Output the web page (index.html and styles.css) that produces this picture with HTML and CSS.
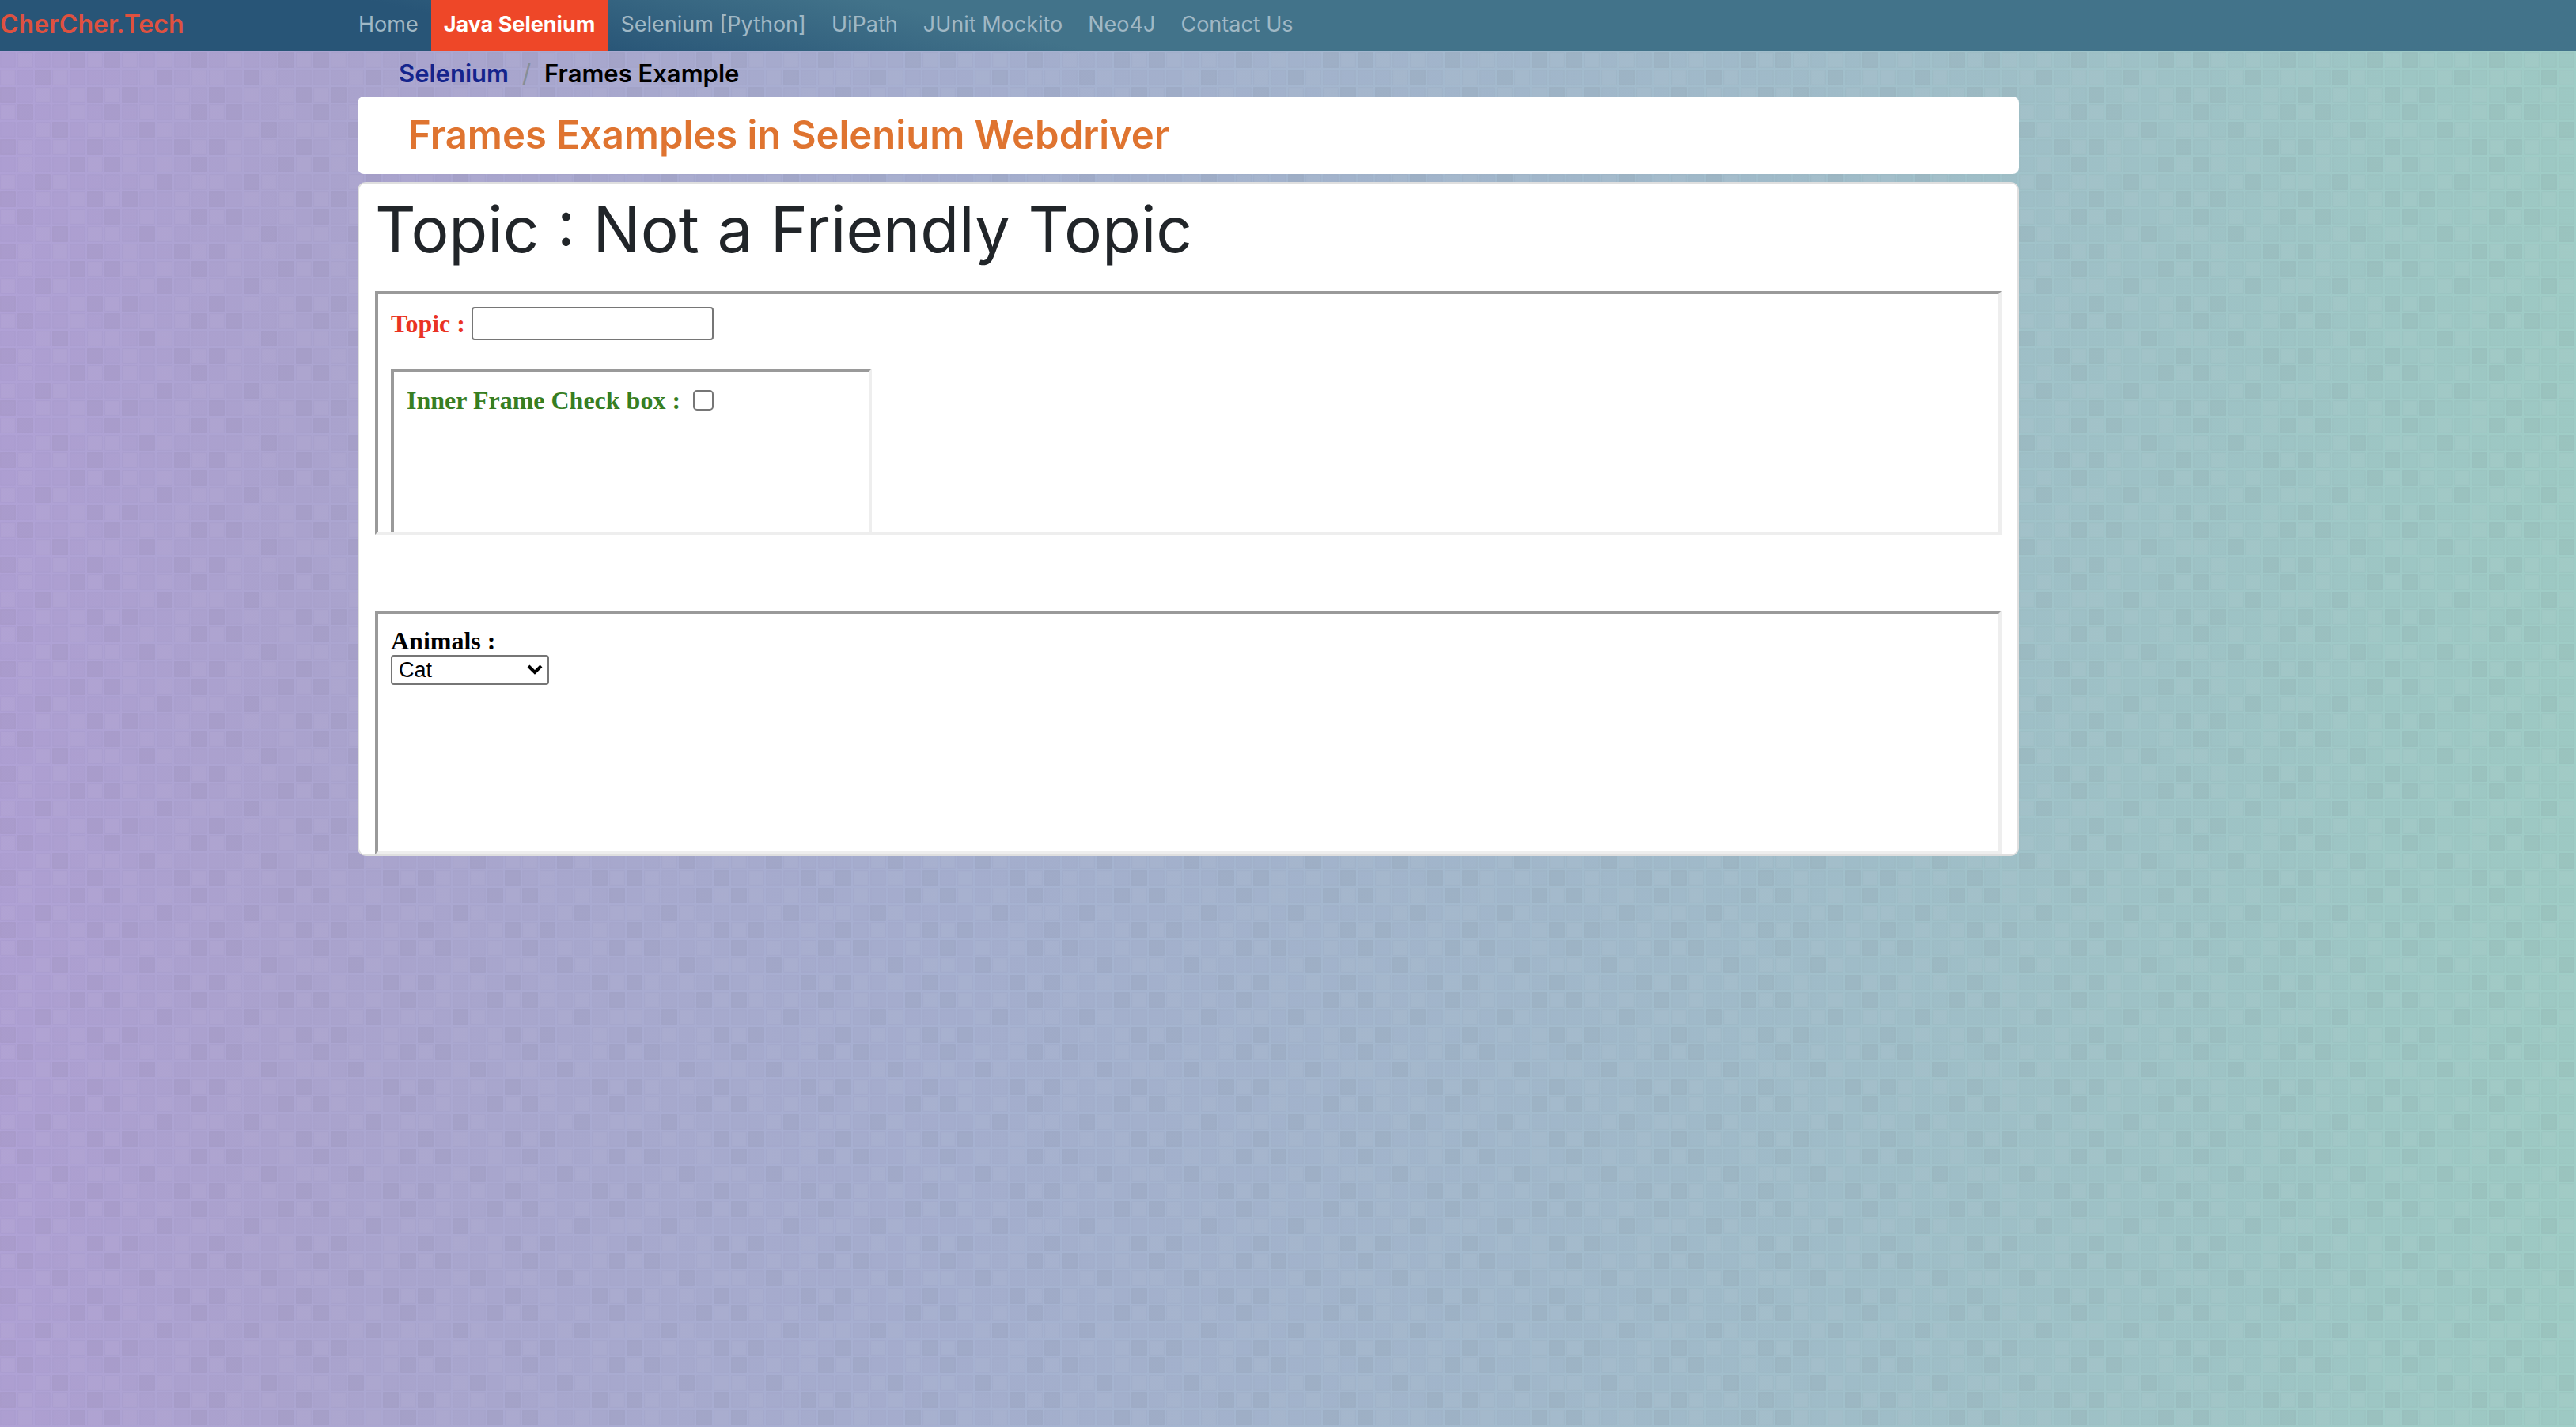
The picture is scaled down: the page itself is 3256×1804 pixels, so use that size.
FILE: index.html
```html
<!DOCTYPE html>
<html lang="en">
<head>
<meta charset="utf-8">
<meta name="viewport" content="width=device-width, initial-scale=1">
<title>Frames Example</title>
<link rel="stylesheet" href="styles.css">
</head>
<body>
<header class="topbar">
  <a class="brand" href="#">CherCher.Tech</a>
  <nav class="menu" aria-label="Main">
    <a class="menu-link" href="#">Home</a>
    <a class="menu-link active" href="#" aria-current="page">Java Selenium</a>
    <a class="menu-link" href="#">Selenium [Python]</a>
    <a class="menu-link" href="#">UiPath</a>
    <a class="menu-link" href="#">JUnit Mockito</a>
    <a class="menu-link" href="#">Neo4J</a>
    <a class="menu-link" href="#">Contact Us</a>
  </nav>
</header>
<main class="content">
  <nav class="breadcrumb" aria-label="Breadcrumb">
    <a class="crumb-link" href="#">Selenium</a>
    <span class="crumb-sep">/</span>
    <span class="crumb-current">Frames Example</span>
  </nav>
  <h1 class="page-title">Frames Examples in Selenium Webdriver</h1>
  <article class="card">
    <h2 class="topic-heading">Topic : Not a Friendly Topic</h2>
    <section class="frame">
      <div class="field">
        <label class="label-topic" for="topic">Topic :</label>
        <input class="text-input" id="topic" type="text">
      </div>
      <div class="frame inner-frame">
        <div class="field">
          <label class="label-check" for="inner">Inner Frame Check box :</label>
          <input class="check" id="inner" type="checkbox">
        </div>
      </div>
    </section>
    <section class="frame">
      <label class="label-animals" for="animals">Animals :</label>
      <select class="animal-select" id="animals">
        <option>Cat</option>
        <option>Baby Cat</option>
        <option>Big Baby Cat</option>
        <option>Avatar</option>
      </select>
    </section>
  </article>
</main>
</body>
</html>
```
FILE: styles.css
```css
* {
  box-sizing: border-box;
}

body {
  margin: 0;
  min-height: 100vh;
  font-family: Inter, "Liberation Sans", sans-serif;
  color: #212529;
  background-image:
    url("data:image/svg+xml,%3Csvg xmlns='http://www.w3.org/2000/svg' width='264' height='132'%3E%3Cdefs%3E%3Cpattern id='g' width='22' height='22' patternUnits='userSpaceOnUse'%3E%3Cpath d='M0 0h20v20H0z' fill='%23604060' fill-opacity='.03'/%3E%3Cpath d='M1 1h18v18h-18z' fill='none' stroke='%23604060' stroke-opacity='.02'/%3E%3C/pattern%3E%3C/defs%3E%3Cpath d='M0 0h264v132H0z' fill='url(%23g)'/%3E%3Cg fill='%23404050' fill-opacity='.04'%3E%3Cpath d='M22 0h20v20h-20zM132 0h20v20h-20zM242 0h20v20h-20zM66 22h20v20h-20zM176 22h20v20h-20zM0 44h20v20h-20zM110 44h20v20h-20zM220 44h20v20h-20zM88 66h20v20h-20zM132 66h20v20h-20zM242 66h20v20h-20zM44 88h20v20h-20zM198 88h20v20h-20zM0 110h20v20h-20zM110 110h20v20h-20zM154 110h20v20h-20z'/%3E%3C/g%3E%3Cg fill='%23fff' fill-opacity='.04'%3E%3Cpath d='M1 1h18v18h-18zM89 1h18v18h-18zM177 1h18v18h-18zM221 1h18v18h-18zM45 23h18v18h-18zM111 23h18v18h-18zM133 23h18v18h-18zM199 23h18v18h-18zM23 45h18v18h-18zM67 45h18v18h-18zM155 45h18v18h-18zM243 45h18v18h-18zM23 67h18v18h-18zM111 67h18v18h-18zM155 67h18v18h-18zM199 67h18v18h-18zM1 89h18v18h-18zM67 89h18v18h-18zM177 89h18v18h-18zM243 89h18v18h-18zM45 111h18v18h-18zM89 111h18v18h-18zM133 111h18v18h-18zM221 111h18v18h-18z'/%3E%3C/g%3E%3C/svg%3E"),
    linear-gradient(92deg, #b0a1d6 0%, #aca5d1 12%, #a6b1d1 38%, #a1c0cb 72%, #9fcac7 92%, #9fcdc6 100%);
}

a {
  text-decoration: none;
}

.topbar {
  display: grid;
  grid-template-columns: 437px 1fr;
  height: 64px;
  background: linear-gradient(13deg, #285577 0%, #285577 21%, #42738a 39%, #42738a 100%);
}

.brand {
  font-size: 32px;
  line-height: 62px;
  font-weight: 600;
  color: #df5140;
}

.menu {
  display: flex;
}

.menu-link {
  padding: 0 16px;
  font-size: 27px;
  line-height: 62px;
  color: #a0b8c5;
  white-space: nowrap;
}

.menu-link.active {
  font-weight: 700;
  color: #fff;
  background: #ee4728;
}

.content {
  width: 2100px;
  max-width: 100%;
  margin-left: 452px;
}

.breadcrumb {
  display: flex;
  gap: 17px;
  padding: 0 52px;
  font-size: 31px;
  line-height: 58px;
  font-weight: 600;
}

.crumb-link {
  color: #14248c;
}

.crumb-sep {
  font-weight: 400;
  color: #868e96;
}

.crumb-current {
  color: #000;
}

.page-title {
  margin: 0 0 10px;
  padding: 0 64px;
  border-radius: 8px;
  font-size: 49px;
  line-height: 98px;
  font-weight: 600;
  color: #df7430;
  background: #fff;
}

.card {
  display: flex;
  flex-direction: column;
  padding: 0 20px;
  border: 2px solid #dfdfdf;
  border-radius: 10px;
  background: #fff;
}

.topic-heading {
  margin: 0 0 20px;
  font-size: 80px;
  line-height: 116px;
  font-weight: 400;
}

.frame {
  height: 308px;
  padding: 16px;
  border: 4px solid;
  border-color: #9a9a9a #eee #eee #9a9a9a;
  overflow: hidden;
  font-family: "Liberation Serif", serif;
  font-size: 32px;
  line-height: 36px;
  font-weight: 700;
}

.frame + .frame {
  margin-top: 96px;
}

.field {
  display: flex;
  align-items: center;
  gap: 8px;
}

.inner-frame {
  width: 608px;
  margin-top: 36px;
  padding-top: 18px;
}

.inner-frame .field {
  gap: 16px;
}

.label-topic {
  color: #ea3323;
}

.label-check {
  color: #377e22;
}

.label-animals {
  display: block;
  color: #000;
}

.text-input {
  width: 306px;
  height: 42px;
  padding: 2px 4px;
  border: 2px solid #767676;
  border-radius: 4px;
  font-size: 26px;
  background: #fff;
}

.check {
  appearance: none;
  width: 26px;
  height: 26px;
  margin: 0;
  border: 2px solid #767676;
  border-radius: 5px;
  background: #fff;
}

.check:checked {
  background: #0075ff;
}

.animal-select {
  appearance: none;
  display: block;
  width: 200px;
  height: 38px;
  padding: 0 8px;
  border: 2px solid #767676;
  border-radius: 4px;
  font: 27px/34px "Liberation Sans", sans-serif;
  color: #000;
  background: #fff url("data:image/svg+xml,%3Csvg xmlns='http://www.w3.org/2000/svg' width='20' height='14'%3E%3Cpath d='M2 2l8 8 8-8' fill='none' stroke='%23000' stroke-width='4'/%3E%3C/svg%3E") no-repeat right 6px center;
}
```
